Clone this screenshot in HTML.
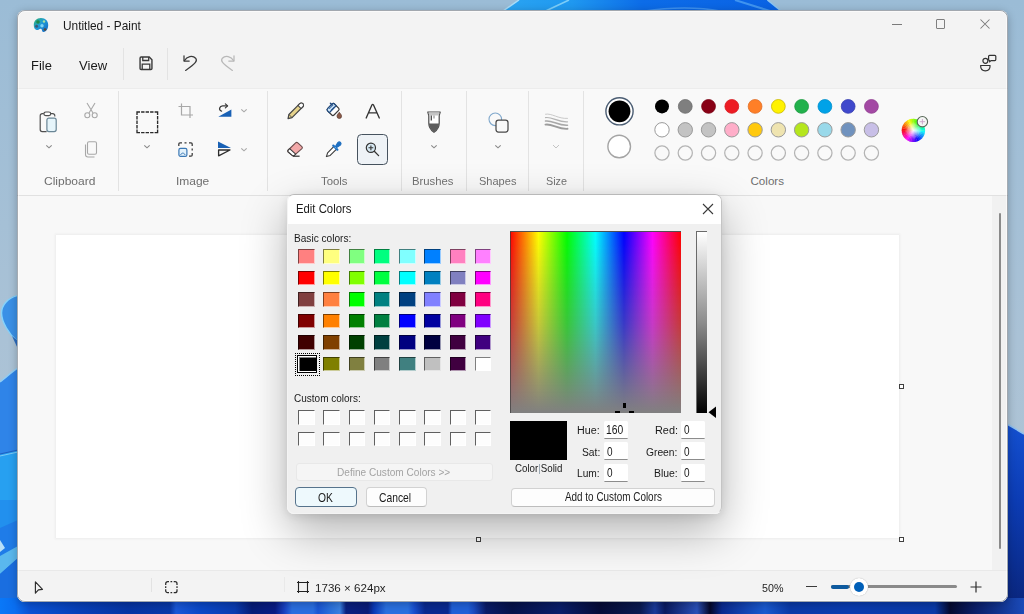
<!DOCTYPE html>
<html><head><meta charset="utf-8">
<style>
*{box-sizing:border-box;margin:0;padding:0}
html,body{width:1024px;height:614px;overflow:hidden}
body{position:relative;font-family:"Liberation Sans",sans-serif;color:#1b1b1b;background:#9fbbd5}
.a{position:absolute}
.t{position:absolute;white-space:nowrap;line-height:1}
svg{position:absolute;overflow:visible}
.sep{position:absolute;width:1px;background:#e3e3e3}
.lbl{position:absolute;white-space:nowrap;line-height:1;font-size:11.5px;color:#6b6b6b}
</style></head><body>
<!-- wallpaper -->
<svg width="1024" height="614" viewBox="0 0 1024 614" style="left:0;top:0">
 <defs>
  <linearGradient id="wg" x1="0" y1="0" x2="0" y2="1">
   <stop offset="0" stop-color="#9bbcd6"/><stop offset="0.55" stop-color="#aac2d6"/><stop offset="1" stop-color="#b2c5d4"/>
  </linearGradient>
  <linearGradient id="bb" x1="0" y1="0" x2="1024" y2="0" gradientUnits="userSpaceOnUse"><stop offset="0.0000" stop-color="#0a78f8"/><stop offset="0.0146" stop-color="#0a6ef0"/><stop offset="0.0293" stop-color="#0a52d4"/><stop offset="0.0781" stop-color="#0840b8"/><stop offset="0.1250" stop-color="#0634a4"/><stop offset="0.1660" stop-color="#0838a8"/><stop offset="0.1719" stop-color="#1a58d8"/><stop offset="0.1953" stop-color="#0a48c8"/><stop offset="0.2295" stop-color="#0a3cb0"/><stop offset="0.2461" stop-color="#061c78"/><stop offset="0.2686" stop-color="#0a1c84"/><stop offset="0.2783" stop-color="#1a44c4"/><stop offset="0.2852" stop-color="#2a6ee0"/><stop offset="0.3057" stop-color="#2a6ee0"/><stop offset="0.3105" stop-color="#1a56d4"/><stop offset="0.3223" stop-color="#2a70dc"/><stop offset="0.3320" stop-color="#3a80e0"/><stop offset="0.3379" stop-color="#0a2080"/><stop offset="0.3594" stop-color="#0a1c78"/><stop offset="0.3652" stop-color="#0a3ab8"/><stop offset="0.3770" stop-color="#2a70e0"/><stop offset="0.3984" stop-color="#2a70e0"/><stop offset="0.4043" stop-color="#1a50d0"/><stop offset="0.4150" stop-color="#0a2a90"/><stop offset="0.4375" stop-color="#0a2a90"/><stop offset="0.4414" stop-color="#2060d8"/><stop offset="0.4570" stop-color="#2060d8"/><stop offset="0.4629" stop-color="#1a4ac0"/><stop offset="0.4746" stop-color="#0a1c68"/><stop offset="0.5000" stop-color="#06124a"/><stop offset="0.5469" stop-color="#0a1e6a"/><stop offset="0.5859" stop-color="#060c38"/><stop offset="0.6250" stop-color="#0a1a50"/><stop offset="0.6396" stop-color="#1a3a9a"/><stop offset="0.6494" stop-color="#0a1a60"/><stop offset="0.6807" stop-color="#2a50b8"/><stop offset="0.6934" stop-color="#05082a"/><stop offset="0.7051" stop-color="#0a2a90"/><stop offset="0.7471" stop-color="#1a5ad0"/><stop offset="0.7715" stop-color="#0a3aa8"/><stop offset="0.8301" stop-color="#0a3cb0"/><stop offset="0.9131" stop-color="#0a3aa8"/><stop offset="0.9277" stop-color="#050a30"/><stop offset="0.9521" stop-color="#0a1e68"/><stop offset="1.0000" stop-color="#1a4ab8"/></linearGradient>
  <linearGradient id="rb" x1="0" y1="0" x2="0" y2="1">
   <stop offset="0" stop-color="#1450d0"/><stop offset="0.4" stop-color="#0c3cb4"/><stop offset="1" stop-color="#0a2478"/>
  </linearGradient>
 </defs>
 <rect width="1024" height="614" fill="url(#wg)"/>
 <defs><linearGradient id="tb" x1="0" y1="0" x2="1" y2="0"><stop offset="0" stop-color="#2aa4f2"/><stop offset="0.25" stop-color="#1f98f0"/><stop offset="0.5" stop-color="#0c6ce8"/><stop offset="1" stop-color="#0a62e4"/></linearGradient></defs>
 <path d="M503 11 L519 0 L767.4 0 L781 11 Z" fill="url(#tb)"/>
 <path d="M503 11 L519 0" stroke="#a8dcf8" stroke-width="1.5"/>
 <path d="M545.6 11 L569 0" stroke="#7ccdf8" stroke-width="1.6"/>
 <path d="M735 0 L770 11" stroke="#3f94f0" stroke-width="2"/>
 <path d="M767.4 0 L781 11" stroke="#8cc4f0" stroke-width="1.5"/>
 <path d="M645 11 C670 7 700 7 720 11" fill="none" stroke="#3c90f0" stroke-width="1.5"/>
 <!-- left strip -->
 <path d="M17 295.6 C8 298 1.5 305 1.5 313 C1.5 322 9 334 17 341 Z" fill="#3a90e6"/>
 <path d="M17 295.6 C8 298 1.5 305 1.5 313 C1.5 322 9 334 17 341" fill="none" stroke="#86d2fa" stroke-width="1.5"/>
 <path d="M12 336 L18 341 L18 349 Z" fill="#2a6cc0"/>
 <path d="M0 382 C6 378 12 371 18 368 L18 614 L0 614 Z" fill="#2f84e8"/>
 <path d="M0 382 C6 378 12 371 18 368" fill="none" stroke="#8fcdf5" stroke-width="1.5"/>
 <path d="M0 454.5 L18 450.6 L18 614 L0 614 Z" fill="#27a0f0"/>
 <path d="M0 454 L18 450" fill="none" stroke="#1f5fc0" stroke-width="1"/>
 <path d="M0 456 L18 452" fill="none" stroke="#7ccaf5" stroke-width="1"/>
 <path d="M0 500 L18 500 L18 614 L0 614 Z" fill="#2290ee"/>
 <path d="M0 528 L18 520 L18 614 L0 614 Z" fill="#1f7ce8"/>
 <path d="M0 556 L18 546 L18 558 L0 574 Z" fill="#5ab8ee"/>
 <path d="M0 540 L5 548 L0 552 Z" fill="#b8e0f8"/>
 <path d="M0 574 L18 558 L18 614 L0 614 Z" fill="#1a6ee0"/>
 <!-- right strip -->
 <path d="M1007 424 L1024 434 L1024 614 L1007 614 Z" fill="url(#rb)"/>
 <path d="M1007 424 L1024 434" stroke="#8fc0f0" stroke-width="1.5"/>
 <!-- bottom strip -->
 <rect x="0" y="598" width="1024" height="16" fill="url(#bb)"/>
</svg>
<!-- window -->
<div class="a" style="left:16.8px;top:10px;width:991.1px;height:591.7px;border-radius:8px;background:#f3f3f3;overflow:hidden;box-shadow:0 2px 8px rgba(0,0,0,0.25)">
 <div class="a" style="left:0;top:78px;width:991.1px;height:108px;background:#f9f9f9;border-top:1px solid #ececec;border-bottom:1px solid #e1e1e1"></div>
 <div class="a" style="left:0;top:186px;width:975.2px;height:374px;background:#f8f8f8"></div>
 <div class="a" style="left:975.2px;top:186px;width:16px;height:374px;background:#f1f1f1"></div>
 <div class="a" style="left:0;top:560px;width:991.1px;height:31.7px;background:#f3f3f3;border-top:1px solid #e9e9e9"></div>
</div>
<div class="a" style="left:16.8px;top:10px;width:991.1px;height:591.7px;border-radius:8px;border:1px solid rgba(50,65,80,0.42)"></div>
<div class="a" style="left:17.8px;top:11px;width:989.1px;height:589.7px;border-radius:7px;border:1px solid rgba(255,255,255,0.55)"></div>
<!-- title bar -->
<svg width="16" height="16" viewBox="0 0 16 16" style="left:32.5px;top:16.5px">
 <defs><linearGradient id="pal" x1="0" y1="0" x2="1" y2="1"><stop offset="0" stop-color="#2fb36a"/><stop offset="0.45" stop-color="#1f9ad8"/><stop offset="1" stop-color="#1565c0"/></linearGradient></defs>
 <path d="M8 1 C12.5 1 15.2 4 15.2 8 C15.2 11.5 13.5 14.8 10.5 15 C8.5 15.1 9.5 12.5 8 11.8 C6.5 11.2 5.5 13.5 3.5 13 C1.5 12.5 0.8 10.2 0.8 8 C0.8 4 3.5 1 8 1 Z" fill="url(#pal)"/>
 <circle cx="5" cy="5" r="1.8" fill="#1e8a4a"/>
 <circle cx="3.6" cy="9.2" r="1.5" fill="#3d5a78"/>
 <circle cx="9" cy="8.8" r="1.7" fill="#7fd4f5"/>
 <circle cx="12" cy="12.5" r="1.3" fill="#5a4a3a"/>
 <circle cx="11" cy="4.5" r="1.2" fill="#a6e0a0"/>
</svg>
<!-- caption buttons -->
<div class="a" style="left:892px;top:24.2px;width:10px;height:1px;background:#7a7a7a"></div>
<div class="a" style="left:936px;top:19.3px;width:9.2px;height:9.4px;border:1px solid #7f7f7f;border-radius:1px"></div>
<svg width="12" height="12" viewBox="0 0 12 12" style="left:979px;top:18px"><path d="M1.5 1.5 L10.5 10.5 M10.5 1.5 L1.5 10.5" stroke="#7a7a7a" stroke-width="1.05"/></svg>
<!-- menu bar -->
<div class="sep" style="left:123px;top:48px;height:32px;background:#e3e3e3"></div>
<svg width="16" height="16" viewBox="0 0 16 16" style="left:137.6px;top:54.6px;transform:scale(1.08);transform-origin:8px 8px">
 <path d="M2.5 3.5 a1 1 0 0 1 1-1 h7.5 l2.5 2.5 v8 a1 1 0 0 1 -1 1 h-9 a1 1 0 0 1 -1-1 z" fill="none" stroke="#3a3a3a" stroke-width="1.3"/>
 <path d="M5 2.5 v3.2 h5.5 v-3.2" fill="none" stroke="#3a3a3a" stroke-width="1.2"/>
 <path d="M4.5 13.5 v-4.5 h7 v4.5" fill="none" stroke="#3a3a3a" stroke-width="1.2"/>
</svg>
<div class="sep" style="left:167px;top:48px;height:32px;background:#e3e3e3"></div>
<svg width="16" height="17" viewBox="0 0 16 17" style="left:182px;top:54px">
 <path d="M2 1.8 V7 H7.2" fill="none" stroke="#3a3a3a" stroke-width="1.25" stroke-linecap="round" stroke-linejoin="round"/>
 <path d="M2.4 6.6 C5 2.5 10.5 1 13.6 4.2 C15.6 6.5 14.5 9.2 3.6 16.4" fill="none" stroke="#3a3a3a" stroke-width="1.25" stroke-linecap="round"/>
</svg>
<svg width="16" height="17" viewBox="0 0 16 17" style="left:220.2px;top:54px">
 <path d="M14 1.8 V7 H8.8" fill="none" stroke="#b8b8b8" stroke-width="1.25" stroke-linecap="round" stroke-linejoin="round"/>
 <path d="M13.6 6.6 C11 2.5 5.5 1 2.4 4.2 C0.4 6.5 1.5 9.2 12.4 16.4" fill="none" stroke="#b8b8b8" stroke-width="1.25" stroke-linecap="round"/>
</svg>
<!-- feedback icon -->
<svg width="18" height="18" viewBox="0 0 18 18" style="left:979px;top:54px">
 <circle cx="6.4" cy="6.8" r="2.5" fill="none" stroke="#333" stroke-width="1.2"/>
 <path d="M1.6 11.5 H11.1 C11.1 15 9 16.8 6.35 16.8 C3.7 16.8 1.6 15 1.6 11.5 Z" fill="none" stroke="#333" stroke-width="1.2" stroke-linejoin="round"/>
 <path d="M10.6 1.3 H15.8 a1 1 0 0 1 1 1 V5.6 a1 1 0 0 1 -1 1 H12 L10.6 7.9 V6.6 a1 1 0 0 1 -1 -1 V2.3 a1 1 0 0 1 1 -1 Z" fill="none" stroke="#333" stroke-width="1.2" stroke-linejoin="round"/>
</svg>
<!-- toolbar separators -->
<div class="sep" style="left:118px;top:91px;height:100px"></div>
<div class="sep" style="left:267px;top:91px;height:100px"></div>
<div class="sep" style="left:401px;top:91px;height:100px"></div>
<div class="sep" style="left:466px;top:91px;height:100px"></div>
<div class="sep" style="left:528px;top:91px;height:100px"></div>
<div class="sep" style="left:583px;top:91px;height:100px"></div>
<!-- labels -->
<!-- clipboard -->
<svg width="20" height="22" viewBox="0 0 20 22" style="left:39px;top:111px">
 <path d="M4.8 2.7 H3.2 a2 2 0 0 0 -2 2 V18.6 a2 2 0 0 0 2 2 H7.6" fill="none" stroke="#505050" stroke-width="1.2"/>
 <path d="M11.7 2.7 H13.8 a2 2 0 0 1 2 2 V5.6" fill="none" stroke="#505050" stroke-width="1.2"/>
 <rect x="4.9" y="1" width="6.8" height="3.6" rx="1.8" fill="#ffffff" stroke="#505050" stroke-width="1.2"/>
 <rect x="7.9" y="7.2" width="9.3" height="13.4" rx="2" fill="#e6f5fb" stroke="#6a8696" stroke-width="1.2"/>
</svg>
<svg width="8" height="5" viewBox="0 0 8 5" style="left:44.5px;top:143.5px"><path d="M1.3 1.3 L4 3.8 L6.7 1.3" fill="none" stroke="#8a8a8a" stroke-width="1.15"/></svg>
<svg width="16" height="17" viewBox="0 0 16 17" style="left:83px;top:102px">
 <path d="M4 1 L10 11 M12 1 L6 11" stroke="#a8a8a8" stroke-width="1.1" fill="none"/>
 <circle cx="4.3" cy="13.3" r="2.5" fill="none" stroke="#a8a8a8" stroke-width="1.1"/>
 <circle cx="11.7" cy="13.3" r="2.5" fill="none" stroke="#a8a8a8" stroke-width="1.1"/>
</svg>
<svg width="14" height="17" viewBox="0 0 14 17" style="left:84px;top:141px">
 <rect x="3.5" y="0.8" width="9" height="12.5" rx="1.5" fill="none" stroke="#a8a8a8" stroke-width="1.1"/>
 <path d="M1.5 3.5 v10 a2.5 2.5 0 0 0 2.5 2.5 h6.5" fill="none" stroke="#a8a8a8" stroke-width="1.1"/>
</svg>
<!-- image -->
<svg width="23" height="23" viewBox="0 0 23 23" style="left:136px;top:111px">
 <path d="M1 4 V1 H21.6 V21.6 H1 V4" fill="none" stroke="#2a2a2a" stroke-width="1.35" stroke-dasharray="6 1.1 3.4 1.1 3.4 1.1 3.4 1.1"/>
</svg>
<svg width="8" height="5" viewBox="0 0 8 5" style="left:143px;top:143.5px"><path d="M1.3 1.3 L4 3.8 L6.7 1.3" fill="none" stroke="#8a8a8a" stroke-width="1.15"/></svg>
<svg width="16" height="16" viewBox="0 0 16 16" style="left:178px;top:102.5px">
 <path d="M3.5 0.5 v11.5 h11.5 M0.5 3.5 h11.5 v11.5" fill="none" stroke="#a8a8a8" stroke-width="1.2"/>
</svg>
<svg width="15" height="15" viewBox="0 0 15 15" style="left:178px;top:141.5px">
 <path d="M0.8 4 v-2 a1.2 1.2 0 0 1 1.2 -1.2 h2 M6.5 0.8 h2 M11 0.8 h2 a1.2 1.2 0 0 1 1.2 1.2 v2 M14.2 6.5 v2 M14.2 11 v2 a1.2 1.2 0 0 1 -1.2 1.2 h-2" fill="none" stroke="#3a3a3a" stroke-width="1.25"/>
 <rect x="0.9" y="6.3" width="8" height="8" rx="1.6" fill="#e2f1fb" stroke="#3a78b5" stroke-width="1.2"/>
 <path d="M2.6 13 C3.5 10.5 6 10.5 7.2 13" fill="none" stroke="#3a78b5" stroke-width="1"/>
</svg>
<svg width="16" height="15" viewBox="0 0 16 15" style="left:216.5px;top:103px">
 <path d="M1.3 13.75 L14.4 6.5 L14.4 13.75 Z" fill="#1961b5"/>
 <path d="M10.2 2.9 H5.6 C2.4 2.9 1.6 6.9 4 7.9 L4.6 8.1" fill="none" stroke="#3a3a3a" stroke-width="1.25" stroke-linecap="round"/>
 <path d="M8.4 0.9 L10.6 2.9 L8.4 4.9" fill="none" stroke="#3a3a3a" stroke-width="1.25" stroke-linecap="round" stroke-linejoin="round"/>
</svg>
<svg width="8" height="5" viewBox="0 0 8 5" style="left:240px;top:108px"><path d="M1.3 1.3 L4 3.8 L6.7 1.3" fill="none" stroke="#a8a8a8" stroke-width="1.15"/></svg>
<svg width="15" height="16" viewBox="0 0 15 16" style="left:216.5px;top:141px">
 <path d="M1 0.5 L14 7 L1 7 Z" fill="#1961b5"/>
 <path d="M1.6 9 L13 9 L1.6 14.8 Z" fill="none" stroke="#2d2d2d" stroke-width="1.3" stroke-linejoin="round"/>
</svg>
<svg width="8" height="5" viewBox="0 0 8 5" style="left:240px;top:146.5px"><path d="M1.3 1.3 L4 3.8 L6.7 1.3" fill="none" stroke="#a8a8a8" stroke-width="1.15"/></svg>
<!-- tools -->
<svg width="17" height="17" viewBox="0 0 17 17" style="left:287px;top:102.8px">
 <path d="M1 15.6 L1.91 11.47 L12.74 0.64 A2.2 2.2 0 0 1 15.86 3.76 L5.03 14.59 Z" fill="#e6d38c" stroke="#454545" stroke-width="1.15" stroke-linejoin="round"/>
 <path d="M12.74 0.64 A2.2 2.2 0 0 1 15.86 3.76 L14.09 5.53 L10.97 2.41 Z" fill="#ffffff" stroke="#454545" stroke-width="1.1" stroke-linejoin="round"/>
 <path d="M1.91 11.47 L5.03 14.59" stroke="#454545" stroke-width="0.9"/>
</svg>
<svg width="17" height="17" viewBox="0 0 17 17" style="left:326px;top:102px">
 <path d="M1.6 6.6 L6.2 2 Q7.3 0.9 8.4 2 L12.6 6.2 Q13.7 7.3 12.6 8.4 L8 13 Q6.9 14.1 5.8 13 L1.6 8.8 Q0.5 7.7 1.6 6.6 Z" fill="#ffffff" stroke="#3a3a3a" stroke-width="1.2"/>
 <path d="M1.6 6.6 L6.2 2 Q7.3 0.9 8.4 2 L10.2 3.8 L3.4 10.6 L1.6 8.8 Q0.5 7.7 1.6 6.6 Z" fill="#cfe6f8" stroke="#1f4a80" stroke-width="1.2"/>
 <path d="M3.2 7 L7.2 3 M4.6 8.4 L8.6 4.4" stroke="#2a5f9e" stroke-width="0.9"/>
 <path d="M4.4 1.2 L6 2.8" stroke="#1f4a80" stroke-width="1.4" stroke-linecap="round"/>
 <path d="M13.3 10.3 C14.8 12 15.6 13.2 15.6 14.2 a2.3 2.3 0 0 1 -4.6 0 C11 13.2 11.8 12 13.3 10.3 Z" fill="#8a5a48" stroke="#5a3a30" stroke-width="0.7"/>
</svg>
<svg width="16" height="16" viewBox="0 0 16 16" style="left:365px;top:102.5px">
 <path d="M1.2 15 L7 1.8 Q7.7 0.9 8.4 1.8 L14.3 15 M3.6 9.8 H11.9" fill="none" stroke="#333333" stroke-width="1.35" stroke-linecap="round" stroke-linejoin="round"/>
</svg>
<svg width="18" height="18" viewBox="0 0 18 18" style="left:286px;top:140px">
 <path d="M9.6 2.9 Q10.7 1.9 11.8 2.9 L15.9 6.6 Q16.9 7.6 15.9 8.6 L8.3 15.3 Q7.25 16.3 6.2 15.3 L2.3 12 Q1.3 11 2.3 10 Z" fill="#f3a9a9" stroke="#6a4a4a" stroke-width="1.1" stroke-linejoin="round"/>
 <path d="M3.65 8.7 L9.66 14.1 L8.3 15.3 Q7.25 16.3 6.2 15.3 L2.3 12 Q1.3 11 2.3 10 Z" fill="#ffffff" stroke="#3d3d3d" stroke-width="1.1" stroke-linejoin="round"/>
 <path d="M7.2 16.2 H13.6" stroke="#2d2d2d" stroke-width="1.2"/>
</svg>
<svg width="17" height="17" viewBox="0 0 17 17" style="left:325px;top:140px">
 <path d="M9.2 6.2 L2.6 12.8 L1.4 16.6 L5.2 15.4 L11.8 8.8" fill="#ffffff" stroke="#3a3a3a" stroke-width="1.1" stroke-linejoin="round"/>
 <path d="M8.3 5.6 L12.4 9.7" stroke="#1f6fc0" stroke-width="2.2" stroke-linecap="round"/>
 <path d="M9.2 4.8 a1 1 0 0 1 0 0" stroke="#6ab8f0" stroke-width="0.8"/>
 <path d="M10.6 6.4 L12.9 2.6 Q14.2 1.4 15.5 2.5 Q16.6 3.8 15.4 5.1 L11.6 7.4 Z" fill="#1f6fc0" stroke="#1f6fc0" stroke-width="1.2" stroke-linejoin="round"/>
 <path d="M9.6 6.8 L11.2 8.4" stroke="#7cc4f4" stroke-width="0.9"/>
</svg>
<div class="a" style="left:357px;top:134px;width:31px;height:31px;border:1.5px solid #46525e;border-radius:4.5px;background:#eef2f6"></div>
<svg width="15" height="15" viewBox="0 0 15 15" style="left:365px;top:141.5px">
 <circle cx="5.9" cy="5.8" r="4.6" fill="#d6e8f3" stroke="#333" stroke-width="1.2"/>
 <path d="M5.9 3.4 V8.2 M3.5 5.8 H8.3" stroke="#333" stroke-width="1.1"/>
 <path d="M9.3 9.2 L13.6 13.6" stroke="#333" stroke-width="1.3" stroke-linecap="round"/>
</svg>
<!-- brushes -->
<svg width="14" height="22" viewBox="0 0 14 22" style="left:427px;top:111px">
 <path d="M0.8 1 L13.2 1 L12.2 4.6 L12.2 12 C12.2 16 9.5 19.6 7 21.3 C4.5 19.6 1.8 16 1.8 12 L1.8 4.6 Z" fill="#ffffff" stroke="#4a4a4a" stroke-width="1.2" stroke-linejoin="round"/>
 <path d="M1.4 1.6 L12.6 1.6 L11.8 4.4 L2.2 4.4 Z" fill="#c4c4c4"/>
 <path d="M1.8 12.6 L12.2 12.6 C12 16 9.5 19.4 7 21 C4.5 19.4 2 16 1.8 12.6 Z" fill="#5e5e5e"/>
 <path d="M4.3 4.6 V9.6" stroke="#4a4a4a" stroke-width="1.3"/>
 <path d="M7 4.6 V7.4" stroke="#9a9a9a" stroke-width="1.3"/>
</svg>
<svg width="8" height="5" viewBox="0 0 8 5" style="left:430px;top:143.5px"><path d="M1.3 1.3 L4 3.8 L6.7 1.3" fill="none" stroke="#8a8a8a" stroke-width="1.15"/></svg>
<!-- shapes -->
<svg width="22" height="22" viewBox="0 0 22 22" style="left:487.5px;top:111.5px">
 <circle cx="7.3" cy="7.3" r="6.3" fill="none" stroke="#80a8cc" stroke-width="1.1"/>
 <rect x="8" y="8" width="12" height="12" rx="2.5" fill="#f9f9f9" stroke="#4a4a4a" stroke-width="1.25"/>
</svg>
<svg width="8" height="5" viewBox="0 0 8 5" style="left:494px;top:143.5px"><path d="M1.3 1.3 L4 3.8 L6.7 1.3" fill="none" stroke="#8a8a8a" stroke-width="1.15"/></svg>
<!-- size -->
<svg width="23" height="18" viewBox="0 0 23 18" style="left:545px;top:113px">
 <path d="M0.5 1.2 C7 0.0 13 6.0 22.5 5.4" fill="none" stroke="#c4c4c4" stroke-width="0.9" stroke-linecap="round"/>
 <path d="M0.5 4.6 C7 3.3999999999999995 13 9.399999999999999 22.5 8.8" fill="none" stroke="#b4b4b4" stroke-width="1.2" stroke-linecap="round"/>
 <path d="M0.5 8.0 C7 6.8 13 12.8 22.5 12.2" fill="none" stroke="#a8a8a8" stroke-width="1.5" stroke-linecap="round"/>
 <path d="M0.5 11.6 C7 10.4 13 16.4 22.5 15.8" fill="none" stroke="#9c9c9c" stroke-width="1.9" stroke-linecap="round"/>
</svg>
<svg width="8" height="5" viewBox="0 0 8 5" style="left:552px;top:143.5px"><path d="M1 1 L4 4 L7 1" fill="none" stroke="#c4c4c4" stroke-width="1"/></svg>
<!-- colors -->
<svg width="1024" height="200" viewBox="0 0 1024 200" style="left:0;top:0">
<circle cx="619.5" cy="111.3" r="13.6" fill="#ffffff" stroke="#4b5d73" stroke-width="1.4"/>
<circle cx="619.5" cy="111.3" r="10.9" fill="#000000"/>
<circle cx="619.2" cy="146.5" r="11.3" fill="#ffffff" stroke="#a4a4a4" stroke-width="1.4"/>
<circle cx="662.00" cy="106.4" r="7.0" fill="#000000"/>
<circle cx="662.00" cy="129.8" r="7.2" fill="#ffffff" stroke="#9a9a9a" stroke-width="1"/>
<circle cx="662.00" cy="153" r="7.1" fill="none" stroke="#b4b4b4" stroke-width="1.25"/>
<circle cx="685.27" cy="106.4" r="6.9" fill="#7f7f7f" stroke="#6f6f6f" stroke-width="0.8"/>
<circle cx="685.27" cy="129.8" r="7.2" fill="#c3c3c3" stroke="#9a9a9a" stroke-width="1"/>
<circle cx="685.27" cy="153" r="7.1" fill="none" stroke="#b4b4b4" stroke-width="1.25"/>
<circle cx="708.54" cy="106.4" r="6.9" fill="#880015" stroke="#7a0012" stroke-width="0.8"/>
<circle cx="708.54" cy="129.8" r="7.2" fill="#c3c3c3" stroke="#9a9a9a" stroke-width="1"/>
<circle cx="708.54" cy="153" r="7.1" fill="none" stroke="#b4b4b4" stroke-width="1.25"/>
<circle cx="731.81" cy="106.4" r="6.9" fill="#ed1c24" stroke="#d51a21" stroke-width="0.8"/>
<circle cx="731.81" cy="129.8" r="7.2" fill="#ffaec9" stroke="#9a9a9a" stroke-width="1"/>
<circle cx="731.81" cy="153" r="7.1" fill="none" stroke="#b4b4b4" stroke-width="1.25"/>
<circle cx="755.08" cy="106.4" r="6.9" fill="#ff7f27" stroke="#e0702a" stroke-width="0.8"/>
<circle cx="755.08" cy="129.8" r="7.2" fill="#ffc90e" stroke="#9a9a9a" stroke-width="1"/>
<circle cx="755.08" cy="153" r="7.1" fill="none" stroke="#b4b4b4" stroke-width="1.25"/>
<circle cx="778.35" cy="106.4" r="6.9" fill="#fff200" stroke="#c8b800" stroke-width="0.8"/>
<circle cx="778.35" cy="129.8" r="7.2" fill="#efe4b0" stroke="#9a9a9a" stroke-width="1"/>
<circle cx="778.35" cy="153" r="7.1" fill="none" stroke="#b4b4b4" stroke-width="1.25"/>
<circle cx="801.62" cy="106.4" r="6.9" fill="#22b14c" stroke="#1c9a40" stroke-width="0.8"/>
<circle cx="801.62" cy="129.8" r="7.2" fill="#b5e61d" stroke="#9a9a9a" stroke-width="1"/>
<circle cx="801.62" cy="153" r="7.1" fill="none" stroke="#b4b4b4" stroke-width="1.25"/>
<circle cx="824.89" cy="106.4" r="6.9" fill="#00a2e8" stroke="#008fcc" stroke-width="0.8"/>
<circle cx="824.89" cy="129.8" r="7.2" fill="#99d9ea" stroke="#9a9a9a" stroke-width="1"/>
<circle cx="824.89" cy="153" r="7.1" fill="none" stroke="#b4b4b4" stroke-width="1.25"/>
<circle cx="848.16" cy="106.4" r="6.9" fill="#3f48cc" stroke="#3840b0" stroke-width="0.8"/>
<circle cx="848.16" cy="129.8" r="7.2" fill="#7092be" stroke="#9a9a9a" stroke-width="1"/>
<circle cx="848.16" cy="153" r="7.1" fill="none" stroke="#b4b4b4" stroke-width="1.25"/>
<circle cx="871.43" cy="106.4" r="6.9" fill="#a349a4" stroke="#903f90" stroke-width="0.8"/>
<circle cx="871.43" cy="129.8" r="7.2" fill="#c8bfe7" stroke="#9a9a9a" stroke-width="1"/>
<circle cx="871.43" cy="153" r="7.1" fill="none" stroke="#b4b4b4" stroke-width="1.25"/>
<defs>
<radialGradient id="wcen" cx="0.5" cy="0.5" r="0.5"><stop offset="0" stop-color="#ffffff" stop-opacity="0.95"/><stop offset="0.75" stop-color="#ffffff" stop-opacity="0"/></radialGradient>
</defs>
<path d="M913.4 130.4 L925.10 130.40 A11.7 11.7 0 0 1 924.84 132.83 Z" fill="hsl(180,95%,52%)"/>
<path d="M913.4 130.4 L924.92 132.43 A11.7 11.7 0 0 1 924.25 134.78 Z" fill="hsl(190,95%,52%)"/>
<path d="M913.4 130.4 L924.39 134.40 A11.7 11.7 0 0 1 923.32 136.60 Z" fill="hsl(200,95%,52%)"/>
<path d="M913.4 130.4 L923.53 136.25 A11.7 11.7 0 0 1 922.09 138.23 Z" fill="hsl(210,95%,52%)"/>
<path d="M913.4 130.4 L922.36 137.92 A11.7 11.7 0 0 1 920.60 139.62 Z" fill="hsl(220,95%,52%)"/>
<path d="M913.4 130.4 L920.92 139.36 A11.7 11.7 0 0 1 918.89 140.73 Z" fill="hsl(230,95%,52%)"/>
<path d="M913.4 130.4 L919.25 140.53 A11.7 11.7 0 0 1 917.02 141.53 Z" fill="hsl(240,95%,52%)"/>
<path d="M913.4 130.4 L917.40 141.39 A11.7 11.7 0 0 1 915.03 141.99 Z" fill="hsl(250,95%,52%)"/>
<path d="M913.4 130.4 L915.43 141.92 A11.7 11.7 0 0 1 912.99 142.09 Z" fill="hsl(260,95%,52%)"/>
<path d="M913.4 130.4 L913.40 142.10 A11.7 11.7 0 0 1 910.97 141.84 Z" fill="hsl(270,95%,52%)"/>
<path d="M913.4 130.4 L911.37 141.92 A11.7 11.7 0 0 1 909.02 141.25 Z" fill="hsl(280,95%,52%)"/>
<path d="M913.4 130.4 L909.40 141.39 A11.7 11.7 0 0 1 907.20 140.32 Z" fill="hsl(290,95%,52%)"/>
<path d="M913.4 130.4 L907.55 140.53 A11.7 11.7 0 0 1 905.57 139.09 Z" fill="hsl(300,95%,52%)"/>
<path d="M913.4 130.4 L905.88 139.36 A11.7 11.7 0 0 1 904.18 137.60 Z" fill="hsl(310,95%,52%)"/>
<path d="M913.4 130.4 L904.44 137.92 A11.7 11.7 0 0 1 903.07 135.89 Z" fill="hsl(320,95%,52%)"/>
<path d="M913.4 130.4 L903.27 136.25 A11.7 11.7 0 0 1 902.27 134.02 Z" fill="hsl(330,95%,52%)"/>
<path d="M913.4 130.4 L902.41 134.40 A11.7 11.7 0 0 1 901.81 132.03 Z" fill="hsl(340,95%,52%)"/>
<path d="M913.4 130.4 L901.88 132.43 A11.7 11.7 0 0 1 901.71 129.99 Z" fill="hsl(350,95%,52%)"/>
<path d="M913.4 130.4 L901.70 130.40 A11.7 11.7 0 0 1 901.96 127.97 Z" fill="hsl(0,95%,52%)"/>
<path d="M913.4 130.4 L901.88 128.37 A11.7 11.7 0 0 1 902.55 126.02 Z" fill="hsl(10,95%,52%)"/>
<path d="M913.4 130.4 L902.41 126.40 A11.7 11.7 0 0 1 903.48 124.20 Z" fill="hsl(20,95%,52%)"/>
<path d="M913.4 130.4 L903.27 124.55 A11.7 11.7 0 0 1 904.71 122.57 Z" fill="hsl(30,95%,52%)"/>
<path d="M913.4 130.4 L904.44 122.88 A11.7 11.7 0 0 1 906.20 121.18 Z" fill="hsl(40,95%,52%)"/>
<path d="M913.4 130.4 L905.88 121.44 A11.7 11.7 0 0 1 907.91 120.07 Z" fill="hsl(50,95%,52%)"/>
<path d="M913.4 130.4 L907.55 120.27 A11.7 11.7 0 0 1 909.78 119.27 Z" fill="hsl(60,95%,52%)"/>
<path d="M913.4 130.4 L909.40 119.41 A11.7 11.7 0 0 1 911.77 118.81 Z" fill="hsl(70,95%,52%)"/>
<path d="M913.4 130.4 L911.37 118.88 A11.7 11.7 0 0 1 913.81 118.71 Z" fill="hsl(80,95%,52%)"/>
<path d="M913.4 130.4 L913.40 118.70 A11.7 11.7 0 0 1 915.83 118.96 Z" fill="hsl(90,95%,52%)"/>
<path d="M913.4 130.4 L915.43 118.88 A11.7 11.7 0 0 1 917.78 119.55 Z" fill="hsl(100,95%,52%)"/>
<path d="M913.4 130.4 L917.40 119.41 A11.7 11.7 0 0 1 919.60 120.48 Z" fill="hsl(110,95%,52%)"/>
<path d="M913.4 130.4 L919.25 120.27 A11.7 11.7 0 0 1 921.23 121.71 Z" fill="hsl(120,95%,52%)"/>
<path d="M913.4 130.4 L920.92 121.44 A11.7 11.7 0 0 1 922.62 123.20 Z" fill="hsl(130,95%,52%)"/>
<path d="M913.4 130.4 L922.36 122.88 A11.7 11.7 0 0 1 923.73 124.91 Z" fill="hsl(140,95%,52%)"/>
<path d="M913.4 130.4 L923.53 124.55 A11.7 11.7 0 0 1 924.53 126.78 Z" fill="hsl(150,95%,52%)"/>
<path d="M913.4 130.4 L924.39 126.40 A11.7 11.7 0 0 1 924.99 128.77 Z" fill="hsl(160,95%,52%)"/>
<path d="M913.4 130.4 L924.92 128.37 A11.7 11.7 0 0 1 925.09 130.81 Z" fill="hsl(170,95%,52%)"/>
<circle cx="913.4" cy="130.4" r="11.7" fill="url(#wcen)"/>
<circle cx="922.4" cy="121.7" r="5.2" fill="#f4f6f4" stroke="#586858" stroke-width="1.1"/>
<path d="M922.4 119 V124.4 M919.7 121.7 H925.1" stroke="#c9a3c9" stroke-width="0.9"/>
</svg>
<!-- canvas -->
<div class="a" style="left:55px;top:234px;width:845px;height:305px;background:#ececec;filter:blur(1px)"></div>
<div class="a" style="left:56px;top:235px;width:843px;height:303px;background:#ffffff"></div>
<div class="a" style="left:899px;top:384px;width:5px;height:5px;border:1px solid #404040;background:#fff"></div>
<div class="a" style="left:475.5px;top:537px;width:5px;height:5px;border:1px solid #404040;background:#fff"></div>
<div class="a" style="left:899px;top:537px;width:5px;height:5px;border:1px solid #404040;background:#fff"></div>
<div class="a" style="left:999px;top:212.5px;width:2px;height:336px;border-radius:1px;background:#8a8a8a"></div>
<svg width="10" height="13" viewBox="0 0 10 13" style="left:34px;top:580.5px"><path d="M1.4 0.9 L8.5 8.4 L4.4 8.9 L1.4 12.2 Z" fill="none" stroke="#2d2d2d" stroke-width="1.15" stroke-linejoin="round"/></svg>
<div class="sep" style="left:150.5px;top:578px;height:14px;background:#e2e2e2"></div>
<svg width="13" height="13" viewBox="0 0 13 13" style="left:164.6px;top:580.6px"><path d="M0.7 4 V2.7 a2 2 0 0 1 2 -2 H4 M8.7 0.7 H10 a2 2 0 0 1 2 2 V4 M12 8.3 V9.7 a2 2 0 0 1 -2 2 H8.7 M4 11.7 H2.7 a2 2 0 0 1 -2 -2 V8.3 M5.5 0.7 H7.2 M12 5.3 V7 M5.5 11.7 H7.2 M0.7 5.3 V7" fill="none" stroke="#2a2a2a" stroke-width="1.25"/></svg>
<div class="sep" style="left:283.5px;top:577px;height:15px;background:#e9e9e9"></div>
<svg width="14" height="14" viewBox="0 0 14 14" style="left:296px;top:580px"><path d="M2.5 1 V13 M11.5 1 V13 M1 2.5 H13 M1 11.5 H13" fill="none" stroke="#222" stroke-width="1.1"/></svg>
<div class="a" style="left:805.5px;top:586px;width:11px;height:1.2px;background:#3a3a3a"></div>
<div class="a" style="left:831px;top:584.8px;width:126px;height:3.6px;border-radius:2px;background:#8a8a8a"></div>
<div class="a" style="left:831px;top:584.9px;width:18px;height:3.8px;border-radius:2px;background:#0e5a9e"></div>
<div class="a" style="left:849.8px;top:577.5px;width:18px;height:18px;border-radius:50%;background:#fff;box-shadow:0 0 1px rgba(0,0,0,0.35)"></div>
<div class="a" style="left:853.8px;top:581.5px;width:10px;height:10px;border-radius:50%;background:#005fb8"></div>
<svg width="12" height="12" viewBox="0 0 12 12" style="left:970.3px;top:581px"><path d="M6 0.5 V11.5 M0.5 6 H11.5" stroke="#2d2d2d" stroke-width="1.2"/></svg>
<!-- dialog -->
<div class="a" style="left:287.3px;top:194.3px;width:435px;height:319.5px;border-radius:7px;box-shadow:0 18px 46px rgba(0,0,0,0.30),0 2px 10px rgba(0,0,0,0.10)"></div>
<div class="a" style="left:287.3px;top:194.3px;width:435px;height:319.5px;border-radius:7px;background:#f0f0f0;border:1px solid #f4f4f4;border-top-color:#b9b9b9;border-right-color:#c4c4c4;overflow:hidden"><div class="a" style="left:0;top:0;width:433px;height:28.5px;background:#ffffff"></div></div>
<svg width="12" height="12" viewBox="0 0 12 12" style="left:701.7px;top:202.7px"><path d="M1 1 L11 11 M11 1 L1 11" stroke="#3a3a3a" stroke-width="1.1"/></svg>
<div class="a" style="left:298.10px;top:249.40px;width:16.5px;height:14.6px;background:#FF8080;border-top:1.4px solid rgba(0,0,0,0.5);border-left:1.4px solid rgba(0,0,0,0.5);border-right:1px solid rgba(255,255,255,0.6);border-bottom:1px solid rgba(255,255,255,0.6)"></div>
<div class="a" style="left:323.35px;top:249.40px;width:16.5px;height:14.6px;background:#FFFF80;border-top:1.4px solid rgba(0,0,0,0.5);border-left:1.4px solid rgba(0,0,0,0.5);border-right:1px solid rgba(255,255,255,0.6);border-bottom:1px solid rgba(255,255,255,0.6)"></div>
<div class="a" style="left:348.60px;top:249.40px;width:16.5px;height:14.6px;background:#80FF80;border-top:1.4px solid rgba(0,0,0,0.5);border-left:1.4px solid rgba(0,0,0,0.5);border-right:1px solid rgba(255,255,255,0.6);border-bottom:1px solid rgba(255,255,255,0.6)"></div>
<div class="a" style="left:373.85px;top:249.40px;width:16.5px;height:14.6px;background:#00FF80;border-top:1.4px solid rgba(0,0,0,0.5);border-left:1.4px solid rgba(0,0,0,0.5);border-right:1px solid rgba(255,255,255,0.6);border-bottom:1px solid rgba(255,255,255,0.6)"></div>
<div class="a" style="left:399.10px;top:249.40px;width:16.5px;height:14.6px;background:#80FFFF;border-top:1.4px solid rgba(0,0,0,0.5);border-left:1.4px solid rgba(0,0,0,0.5);border-right:1px solid rgba(255,255,255,0.6);border-bottom:1px solid rgba(255,255,255,0.6)"></div>
<div class="a" style="left:424.35px;top:249.40px;width:16.5px;height:14.6px;background:#0080FF;border-top:1.4px solid rgba(0,0,0,0.5);border-left:1.4px solid rgba(0,0,0,0.5);border-right:1px solid rgba(255,255,255,0.6);border-bottom:1px solid rgba(255,255,255,0.6)"></div>
<div class="a" style="left:449.60px;top:249.40px;width:16.5px;height:14.6px;background:#FF80C0;border-top:1.4px solid rgba(0,0,0,0.5);border-left:1.4px solid rgba(0,0,0,0.5);border-right:1px solid rgba(255,255,255,0.6);border-bottom:1px solid rgba(255,255,255,0.6)"></div>
<div class="a" style="left:474.85px;top:249.40px;width:16.5px;height:14.6px;background:#FF80FF;border-top:1.4px solid rgba(0,0,0,0.5);border-left:1.4px solid rgba(0,0,0,0.5);border-right:1px solid rgba(255,255,255,0.6);border-bottom:1px solid rgba(255,255,255,0.6)"></div>
<div class="a" style="left:298.10px;top:270.90px;width:16.5px;height:14.6px;background:#FF0000;border-top:1.4px solid rgba(0,0,0,0.5);border-left:1.4px solid rgba(0,0,0,0.5);border-right:1px solid rgba(255,255,255,0.6);border-bottom:1px solid rgba(255,255,255,0.6)"></div>
<div class="a" style="left:323.35px;top:270.90px;width:16.5px;height:14.6px;background:#FFFF00;border-top:1.4px solid rgba(0,0,0,0.5);border-left:1.4px solid rgba(0,0,0,0.5);border-right:1px solid rgba(255,255,255,0.6);border-bottom:1px solid rgba(255,255,255,0.6)"></div>
<div class="a" style="left:348.60px;top:270.90px;width:16.5px;height:14.6px;background:#80FF00;border-top:1.4px solid rgba(0,0,0,0.5);border-left:1.4px solid rgba(0,0,0,0.5);border-right:1px solid rgba(255,255,255,0.6);border-bottom:1px solid rgba(255,255,255,0.6)"></div>
<div class="a" style="left:373.85px;top:270.90px;width:16.5px;height:14.6px;background:#00FF40;border-top:1.4px solid rgba(0,0,0,0.5);border-left:1.4px solid rgba(0,0,0,0.5);border-right:1px solid rgba(255,255,255,0.6);border-bottom:1px solid rgba(255,255,255,0.6)"></div>
<div class="a" style="left:399.10px;top:270.90px;width:16.5px;height:14.6px;background:#00FFFF;border-top:1.4px solid rgba(0,0,0,0.5);border-left:1.4px solid rgba(0,0,0,0.5);border-right:1px solid rgba(255,255,255,0.6);border-bottom:1px solid rgba(255,255,255,0.6)"></div>
<div class="a" style="left:424.35px;top:270.90px;width:16.5px;height:14.6px;background:#0080C0;border-top:1.4px solid rgba(0,0,0,0.5);border-left:1.4px solid rgba(0,0,0,0.5);border-right:1px solid rgba(255,255,255,0.6);border-bottom:1px solid rgba(255,255,255,0.6)"></div>
<div class="a" style="left:449.60px;top:270.90px;width:16.5px;height:14.6px;background:#8080C0;border-top:1.4px solid rgba(0,0,0,0.5);border-left:1.4px solid rgba(0,0,0,0.5);border-right:1px solid rgba(255,255,255,0.6);border-bottom:1px solid rgba(255,255,255,0.6)"></div>
<div class="a" style="left:474.85px;top:270.90px;width:16.5px;height:14.6px;background:#FF00FF;border-top:1.4px solid rgba(0,0,0,0.5);border-left:1.4px solid rgba(0,0,0,0.5);border-right:1px solid rgba(255,255,255,0.6);border-bottom:1px solid rgba(255,255,255,0.6)"></div>
<div class="a" style="left:298.10px;top:292.40px;width:16.5px;height:14.6px;background:#804040;border-top:1.4px solid rgba(0,0,0,0.5);border-left:1.4px solid rgba(0,0,0,0.5);border-right:1px solid rgba(255,255,255,0.6);border-bottom:1px solid rgba(255,255,255,0.6)"></div>
<div class="a" style="left:323.35px;top:292.40px;width:16.5px;height:14.6px;background:#FF8040;border-top:1.4px solid rgba(0,0,0,0.5);border-left:1.4px solid rgba(0,0,0,0.5);border-right:1px solid rgba(255,255,255,0.6);border-bottom:1px solid rgba(255,255,255,0.6)"></div>
<div class="a" style="left:348.60px;top:292.40px;width:16.5px;height:14.6px;background:#00FF00;border-top:1.4px solid rgba(0,0,0,0.5);border-left:1.4px solid rgba(0,0,0,0.5);border-right:1px solid rgba(255,255,255,0.6);border-bottom:1px solid rgba(255,255,255,0.6)"></div>
<div class="a" style="left:373.85px;top:292.40px;width:16.5px;height:14.6px;background:#008080;border-top:1.4px solid rgba(0,0,0,0.5);border-left:1.4px solid rgba(0,0,0,0.5);border-right:1px solid rgba(255,255,255,0.6);border-bottom:1px solid rgba(255,255,255,0.6)"></div>
<div class="a" style="left:399.10px;top:292.40px;width:16.5px;height:14.6px;background:#004080;border-top:1.4px solid rgba(0,0,0,0.5);border-left:1.4px solid rgba(0,0,0,0.5);border-right:1px solid rgba(255,255,255,0.6);border-bottom:1px solid rgba(255,255,255,0.6)"></div>
<div class="a" style="left:424.35px;top:292.40px;width:16.5px;height:14.6px;background:#8080FF;border-top:1.4px solid rgba(0,0,0,0.5);border-left:1.4px solid rgba(0,0,0,0.5);border-right:1px solid rgba(255,255,255,0.6);border-bottom:1px solid rgba(255,255,255,0.6)"></div>
<div class="a" style="left:449.60px;top:292.40px;width:16.5px;height:14.6px;background:#800040;border-top:1.4px solid rgba(0,0,0,0.5);border-left:1.4px solid rgba(0,0,0,0.5);border-right:1px solid rgba(255,255,255,0.6);border-bottom:1px solid rgba(255,255,255,0.6)"></div>
<div class="a" style="left:474.85px;top:292.40px;width:16.5px;height:14.6px;background:#FF0080;border-top:1.4px solid rgba(0,0,0,0.5);border-left:1.4px solid rgba(0,0,0,0.5);border-right:1px solid rgba(255,255,255,0.6);border-bottom:1px solid rgba(255,255,255,0.6)"></div>
<div class="a" style="left:298.10px;top:313.90px;width:16.5px;height:14.6px;background:#800000;border-top:1.4px solid rgba(0,0,0,0.5);border-left:1.4px solid rgba(0,0,0,0.5);border-right:1px solid rgba(255,255,255,0.6);border-bottom:1px solid rgba(255,255,255,0.6)"></div>
<div class="a" style="left:323.35px;top:313.90px;width:16.5px;height:14.6px;background:#FF8000;border-top:1.4px solid rgba(0,0,0,0.5);border-left:1.4px solid rgba(0,0,0,0.5);border-right:1px solid rgba(255,255,255,0.6);border-bottom:1px solid rgba(255,255,255,0.6)"></div>
<div class="a" style="left:348.60px;top:313.90px;width:16.5px;height:14.6px;background:#008000;border-top:1.4px solid rgba(0,0,0,0.5);border-left:1.4px solid rgba(0,0,0,0.5);border-right:1px solid rgba(255,255,255,0.6);border-bottom:1px solid rgba(255,255,255,0.6)"></div>
<div class="a" style="left:373.85px;top:313.90px;width:16.5px;height:14.6px;background:#008040;border-top:1.4px solid rgba(0,0,0,0.5);border-left:1.4px solid rgba(0,0,0,0.5);border-right:1px solid rgba(255,255,255,0.6);border-bottom:1px solid rgba(255,255,255,0.6)"></div>
<div class="a" style="left:399.10px;top:313.90px;width:16.5px;height:14.6px;background:#0000FF;border-top:1.4px solid rgba(0,0,0,0.5);border-left:1.4px solid rgba(0,0,0,0.5);border-right:1px solid rgba(255,255,255,0.6);border-bottom:1px solid rgba(255,255,255,0.6)"></div>
<div class="a" style="left:424.35px;top:313.90px;width:16.5px;height:14.6px;background:#0000A0;border-top:1.4px solid rgba(0,0,0,0.5);border-left:1.4px solid rgba(0,0,0,0.5);border-right:1px solid rgba(255,255,255,0.6);border-bottom:1px solid rgba(255,255,255,0.6)"></div>
<div class="a" style="left:449.60px;top:313.90px;width:16.5px;height:14.6px;background:#800080;border-top:1.4px solid rgba(0,0,0,0.5);border-left:1.4px solid rgba(0,0,0,0.5);border-right:1px solid rgba(255,255,255,0.6);border-bottom:1px solid rgba(255,255,255,0.6)"></div>
<div class="a" style="left:474.85px;top:313.90px;width:16.5px;height:14.6px;background:#8000FF;border-top:1.4px solid rgba(0,0,0,0.5);border-left:1.4px solid rgba(0,0,0,0.5);border-right:1px solid rgba(255,255,255,0.6);border-bottom:1px solid rgba(255,255,255,0.6)"></div>
<div class="a" style="left:298.10px;top:335.40px;width:16.5px;height:14.6px;background:#400000;border-top:1.4px solid rgba(0,0,0,0.5);border-left:1.4px solid rgba(0,0,0,0.5);border-right:1px solid rgba(255,255,255,0.6);border-bottom:1px solid rgba(255,255,255,0.6)"></div>
<div class="a" style="left:323.35px;top:335.40px;width:16.5px;height:14.6px;background:#804000;border-top:1.4px solid rgba(0,0,0,0.5);border-left:1.4px solid rgba(0,0,0,0.5);border-right:1px solid rgba(255,255,255,0.6);border-bottom:1px solid rgba(255,255,255,0.6)"></div>
<div class="a" style="left:348.60px;top:335.40px;width:16.5px;height:14.6px;background:#004000;border-top:1.4px solid rgba(0,0,0,0.5);border-left:1.4px solid rgba(0,0,0,0.5);border-right:1px solid rgba(255,255,255,0.6);border-bottom:1px solid rgba(255,255,255,0.6)"></div>
<div class="a" style="left:373.85px;top:335.40px;width:16.5px;height:14.6px;background:#004040;border-top:1.4px solid rgba(0,0,0,0.5);border-left:1.4px solid rgba(0,0,0,0.5);border-right:1px solid rgba(255,255,255,0.6);border-bottom:1px solid rgba(255,255,255,0.6)"></div>
<div class="a" style="left:399.10px;top:335.40px;width:16.5px;height:14.6px;background:#000080;border-top:1.4px solid rgba(0,0,0,0.5);border-left:1.4px solid rgba(0,0,0,0.5);border-right:1px solid rgba(255,255,255,0.6);border-bottom:1px solid rgba(255,255,255,0.6)"></div>
<div class="a" style="left:424.35px;top:335.40px;width:16.5px;height:14.6px;background:#000040;border-top:1.4px solid rgba(0,0,0,0.5);border-left:1.4px solid rgba(0,0,0,0.5);border-right:1px solid rgba(255,255,255,0.6);border-bottom:1px solid rgba(255,255,255,0.6)"></div>
<div class="a" style="left:449.60px;top:335.40px;width:16.5px;height:14.6px;background:#400040;border-top:1.4px solid rgba(0,0,0,0.5);border-left:1.4px solid rgba(0,0,0,0.5);border-right:1px solid rgba(255,255,255,0.6);border-bottom:1px solid rgba(255,255,255,0.6)"></div>
<div class="a" style="left:474.85px;top:335.40px;width:16.5px;height:14.6px;background:#400080;border-top:1.4px solid rgba(0,0,0,0.5);border-left:1.4px solid rgba(0,0,0,0.5);border-right:1px solid rgba(255,255,255,0.6);border-bottom:1px solid rgba(255,255,255,0.6)"></div>
<div class="a" style="left:295.2px;top:353px;width:24.4px;height:22.5px;border:1px dotted #000"></div>
<div class="a" style="left:296.8px;top:354.9px;width:20.6px;height:18px;border:1.4px solid #000;background:#fff"></div>
<div class="a" style="left:298.6px;top:356.6px;width:17px;height:14.6px;border-top:1px solid #808080;border-left:1px solid #808080;background:#000"></div>
<div class="a" style="left:323.35px;top:356.90px;width:16.5px;height:14.6px;background:#808000;border-top:1.4px solid rgba(0,0,0,0.5);border-left:1.4px solid rgba(0,0,0,0.5);border-right:1px solid rgba(255,255,255,0.6);border-bottom:1px solid rgba(255,255,255,0.6)"></div>
<div class="a" style="left:348.60px;top:356.90px;width:16.5px;height:14.6px;background:#808040;border-top:1.4px solid rgba(0,0,0,0.5);border-left:1.4px solid rgba(0,0,0,0.5);border-right:1px solid rgba(255,255,255,0.6);border-bottom:1px solid rgba(255,255,255,0.6)"></div>
<div class="a" style="left:373.85px;top:356.90px;width:16.5px;height:14.6px;background:#808080;border-top:1.4px solid rgba(0,0,0,0.5);border-left:1.4px solid rgba(0,0,0,0.5);border-right:1px solid rgba(255,255,255,0.6);border-bottom:1px solid rgba(255,255,255,0.6)"></div>
<div class="a" style="left:399.10px;top:356.90px;width:16.5px;height:14.6px;background:#408080;border-top:1.4px solid rgba(0,0,0,0.5);border-left:1.4px solid rgba(0,0,0,0.5);border-right:1px solid rgba(255,255,255,0.6);border-bottom:1px solid rgba(255,255,255,0.6)"></div>
<div class="a" style="left:424.35px;top:356.90px;width:16.5px;height:14.6px;background:#C0C0C0;border-top:1.4px solid rgba(0,0,0,0.5);border-left:1.4px solid rgba(0,0,0,0.5);border-right:1px solid rgba(255,255,255,0.6);border-bottom:1px solid rgba(255,255,255,0.6)"></div>
<div class="a" style="left:449.60px;top:356.90px;width:16.5px;height:14.6px;background:#400040;border-top:1.4px solid rgba(0,0,0,0.5);border-left:1.4px solid rgba(0,0,0,0.5);border-right:1px solid rgba(255,255,255,0.6);border-bottom:1px solid rgba(255,255,255,0.6)"></div>
<div class="a" style="left:474.85px;top:356.90px;width:16.5px;height:14.6px;background:#FFFFFF;border-top:1.4px solid rgba(0,0,0,0.5);border-left:1.4px solid rgba(0,0,0,0.5);border-right:1px solid rgba(255,255,255,0.6);border-bottom:1px solid rgba(255,255,255,0.6)"></div>
<div class="a" style="left:298.10px;top:410.30px;width:16.5px;height:14.8px;background:#fdfdfd;border-top:1.6px solid #606060;border-left:1.6px solid #606060;border-right:1px solid #ffffff;border-bottom:1px solid #ffffff"></div>
<div class="a" style="left:323.35px;top:410.30px;width:16.5px;height:14.8px;background:#fdfdfd;border-top:1.6px solid #606060;border-left:1.6px solid #606060;border-right:1px solid #ffffff;border-bottom:1px solid #ffffff"></div>
<div class="a" style="left:348.60px;top:410.30px;width:16.5px;height:14.8px;background:#fdfdfd;border-top:1.6px solid #606060;border-left:1.6px solid #606060;border-right:1px solid #ffffff;border-bottom:1px solid #ffffff"></div>
<div class="a" style="left:373.85px;top:410.30px;width:16.5px;height:14.8px;background:#fdfdfd;border-top:1.6px solid #606060;border-left:1.6px solid #606060;border-right:1px solid #ffffff;border-bottom:1px solid #ffffff"></div>
<div class="a" style="left:399.10px;top:410.30px;width:16.5px;height:14.8px;background:#fdfdfd;border-top:1.6px solid #606060;border-left:1.6px solid #606060;border-right:1px solid #ffffff;border-bottom:1px solid #ffffff"></div>
<div class="a" style="left:424.35px;top:410.30px;width:16.5px;height:14.8px;background:#fdfdfd;border-top:1.6px solid #606060;border-left:1.6px solid #606060;border-right:1px solid #ffffff;border-bottom:1px solid #ffffff"></div>
<div class="a" style="left:449.60px;top:410.30px;width:16.5px;height:14.8px;background:#fdfdfd;border-top:1.6px solid #606060;border-left:1.6px solid #606060;border-right:1px solid #ffffff;border-bottom:1px solid #ffffff"></div>
<div class="a" style="left:474.85px;top:410.30px;width:16.5px;height:14.8px;background:#fdfdfd;border-top:1.6px solid #606060;border-left:1.6px solid #606060;border-right:1px solid #ffffff;border-bottom:1px solid #ffffff"></div>
<div class="a" style="left:298.10px;top:431.60px;width:16.5px;height:14.8px;background:#fdfdfd;border-top:1.6px solid #606060;border-left:1.6px solid #606060;border-right:1px solid #ffffff;border-bottom:1px solid #ffffff"></div>
<div class="a" style="left:323.35px;top:431.60px;width:16.5px;height:14.8px;background:#fdfdfd;border-top:1.6px solid #606060;border-left:1.6px solid #606060;border-right:1px solid #ffffff;border-bottom:1px solid #ffffff"></div>
<div class="a" style="left:348.60px;top:431.60px;width:16.5px;height:14.8px;background:#fdfdfd;border-top:1.6px solid #606060;border-left:1.6px solid #606060;border-right:1px solid #ffffff;border-bottom:1px solid #ffffff"></div>
<div class="a" style="left:373.85px;top:431.60px;width:16.5px;height:14.8px;background:#fdfdfd;border-top:1.6px solid #606060;border-left:1.6px solid #606060;border-right:1px solid #ffffff;border-bottom:1px solid #ffffff"></div>
<div class="a" style="left:399.10px;top:431.60px;width:16.5px;height:14.8px;background:#fdfdfd;border-top:1.6px solid #606060;border-left:1.6px solid #606060;border-right:1px solid #ffffff;border-bottom:1px solid #ffffff"></div>
<div class="a" style="left:424.35px;top:431.60px;width:16.5px;height:14.8px;background:#fdfdfd;border-top:1.6px solid #606060;border-left:1.6px solid #606060;border-right:1px solid #ffffff;border-bottom:1px solid #ffffff"></div>
<div class="a" style="left:449.60px;top:431.60px;width:16.5px;height:14.8px;background:#fdfdfd;border-top:1.6px solid #606060;border-left:1.6px solid #606060;border-right:1px solid #ffffff;border-bottom:1px solid #ffffff"></div>
<div class="a" style="left:474.85px;top:431.60px;width:16.5px;height:14.8px;background:#fdfdfd;border-top:1.6px solid #606060;border-left:1.6px solid #606060;border-right:1px solid #ffffff;border-bottom:1px solid #ffffff"></div>
<div class="a" style="left:295.5px;top:463.2px;width:197.6px;height:17.6px;border-radius:3px;background:#f5f5f5;border:1px solid #e8e8e8"></div>
<div class="a" style="left:295px;top:487.1px;width:62px;height:19.6px;border-radius:4px;background:#eef9fd;border:1.4px solid #56738c"></div>
<div class="a" style="left:365.5px;top:487.1px;width:61px;height:19.6px;border-radius:4px;background:#fdfdfd;border:1px solid #d2d2d2;border-bottom-color:#bdbdbd"></div>
<div class="a" style="left:509.5px;top:231.2px;width:171px;height:181.5px;background:linear-gradient(to right,#ff0000 0%,#ffff00 16.67%,#00ff00 33.33%,#00ffff 50%,#0000ff 66.67%,#ff00ff 83.33%,#ff0000 100%)"></div>
<div class="a" style="left:509.5px;top:231.2px;width:171px;height:181.5px;border-top:1px solid rgba(60,60,60,0.7);border-left:1px solid rgba(60,60,60,0.7);background:linear-gradient(to bottom,rgba(128,128,128,0) 0%,rgba(128,128,128,0.44) 50%,rgba(128,128,128,1) 100%)"></div>
<div class="a" style="left:623.2px;top:403.2px;width:2.7px;height:4.6px;background:#000"></div>
<div class="a" style="left:615.2px;top:411px;width:4.8px;height:1.7px;background:#000"></div>
<div class="a" style="left:629.1px;top:411px;width:4.9px;height:1.7px;background:#000"></div>
<div class="a" style="left:696.3px;top:231px;width:10.7px;height:181.6px;border-top:1px solid #6a6a6a;border-left:1px solid #6a6a6a;background:linear-gradient(to bottom,#ffffff 0%,#8c8c8c 50%,#000000 100%)"></div>
<svg width="9" height="13" viewBox="0 0 9 13" style="left:707.5px;top:406px"><path d="M0.5 6.2 L8 0.5 V12 Z" fill="#000"/></svg>
<div class="a" style="left:510.3px;top:420.6px;width:56.5px;height:39.2px;background:#000"></div>
<div class="a" style="left:603.6px;top:421.0px;width:24px;height:18.3px;background:#fff;border-radius:1.5px;border-bottom:1px solid #8c8c8c"></div>
<div class="a" style="left:681.2px;top:421.0px;width:24px;height:18.3px;background:#fff;border-radius:1.5px;border-bottom:1px solid #8c8c8c"></div>
<div class="a" style="left:603.6px;top:442.2px;width:24px;height:18.3px;background:#fff;border-radius:1.5px;border-bottom:1px solid #8c8c8c"></div>
<div class="a" style="left:681.2px;top:442.2px;width:24px;height:18.3px;background:#fff;border-radius:1.5px;border-bottom:1px solid #8c8c8c"></div>
<div class="a" style="left:603.6px;top:463.8px;width:24px;height:18.3px;background:#fff;border-radius:1.5px;border-bottom:1px solid #8c8c8c"></div>
<div class="a" style="left:681.2px;top:463.8px;width:24px;height:18.3px;background:#fff;border-radius:1.5px;border-bottom:1px solid #8c8c8c"></div>
<div class="a" style="left:511.4px;top:487.6px;width:203.3px;height:19px;border-radius:4px;background:#fdfdfd;border:1px solid #d2d2d2;border-bottom-color:#bdbdbd"></div>
<!-- texts -->
<div class="t" style="left:63.41px;top:20.00px;font-size:12.03px;color:#1a1a1a;transform:scaleX(0.987);transform-origin:0 0">Untitled - Paint</div>
<div class="t" style="left:30.73px;top:59.00px;font-size:13.40px;color:#1a1a1a;transform:scaleX(0.965);transform-origin:0 0">File</div>
<div class="t" style="left:78.90px;top:59.00px;font-size:13.40px;color:#1a1a1a;transform:scaleX(0.976);transform-origin:0 0">View</div>
<div class="t" style="left:43.70px;top:175.00px;font-size:11.60px;color:#6e6e6e;transform:scaleX(1.035);transform-origin:0 0">Clipboard</div>
<div class="t" style="left:175.77px;top:175.00px;font-size:11.60px;color:#6e6e6e;transform:scaleX(1.032);transform-origin:0 0">Image</div>
<div class="t" style="left:320.50px;top:175.00px;font-size:11.60px;color:#6e6e6e;transform:scaleX(0.981);transform-origin:0 0">Tools</div>
<div class="t" style="left:411.72px;top:175.00px;font-size:11.60px;color:#6e6e6e;transform:scaleX(0.976);transform-origin:0 0">Brushes</div>
<div class="t" style="left:478.50px;top:175.00px;font-size:11.60px;color:#6e6e6e;transform:scaleX(0.951);transform-origin:0 0">Shapes</div>
<div class="t" style="left:545.50px;top:175.00px;font-size:11.60px;color:#6e6e6e;transform:scaleX(0.932);transform-origin:0 0">Size</div>
<div class="t" style="left:750.50px;top:175.00px;font-size:11.60px;color:#6e6e6e;transform:scaleX(1.000);transform-origin:0 0">Colors</div>
<div class="t" style="left:315.26px;top:583.00px;font-size:11.16px;color:#1f1f1f;transform:scaleX(1.040);transform-origin:0 0">1736 × 624px</div>
<div class="t" style="left:762.40px;top:583.00px;font-size:11.16px;color:#1f1f1f;transform:scaleX(0.959);transform-origin:0 0">50%</div>
<div class="t" style="left:295.75px;top:204.00px;font-size:11.88px;color:#1a1a1a;transform:scaleX(0.954);transform-origin:0 0">Edit Colors</div>
<div class="t" style="left:294.24px;top:232.00px;font-size:11.74px;color:#1a1a1a;transform:scaleX(0.862);transform-origin:0 0">Basic colors:</div>
<div class="t" style="left:293.70px;top:393.00px;font-size:11.45px;color:#1a1a1a;transform:scaleX(0.875);transform-origin:0 0">Custom colors:</div>
<div class="t" style="left:337.23px;top:467.00px;font-size:11.59px;color:#a3a3a3;transform:scaleX(0.871);transform-origin:0 0">Define Custom Colors &gt;&gt;</div>
<div class="t" style="left:318.00px;top:493.00px;font-size:11.88px;color:#1a1a1a;transform:scaleX(0.865);transform-origin:0 0">OK</div>
<div class="t" style="left:378.90px;top:493.00px;font-size:11.88px;color:#1a1a1a;transform:scaleX(0.868);transform-origin:0 0">Cancel</div>
<div class="t" style="left:515.00px;top:463.00px;font-size:10.72px;color:#1a1a1a;transform:scaleX(0.908);transform-origin:0 0">Color<span style="color:#8a9aa8">|</span>Solid</div>
<div class="t" style="left:577.08px;top:424.00px;font-size:11.70px;color:#1a1a1a;transform:scaleX(0.917);transform-origin:0 0">Hue:</div>
<div class="t" style="left:581.50px;top:446.00px;font-size:11.70px;color:#1a1a1a;transform:scaleX(0.880);transform-origin:0 0">Sat:</div>
<div class="t" style="left:577.33px;top:467.00px;font-size:11.70px;color:#1a1a1a;transform:scaleX(0.871);transform-origin:0 0">Lum:</div>
<div class="t" style="left:654.57px;top:424.00px;font-size:11.70px;color:#1a1a1a;transform:scaleX(0.930);transform-origin:0 0">Red:</div>
<div class="t" style="left:646.20px;top:446.00px;font-size:11.70px;color:#1a1a1a;transform:scaleX(0.877);transform-origin:0 0">Green:</div>
<div class="t" style="left:653.71px;top:467.00px;font-size:11.70px;color:#1a1a1a;transform:scaleX(0.892);transform-origin:0 0">Blue:</div>
<div class="t" style="left:605.63px;top:425.00px;font-size:11.90px;color:#1a1a1a;transform:scaleX(0.868);transform-origin:0 0">160</div>
<div class="t" style="left:606.60px;top:447.00px;font-size:11.90px;color:#1a1a1a;transform:scaleX(0.840);transform-origin:0 0">0</div>
<div class="t" style="left:606.60px;top:468.00px;font-size:11.90px;color:#1a1a1a;transform:scaleX(0.840);transform-origin:0 0">0</div>
<div class="t" style="left:683.80px;top:425.00px;font-size:11.90px;color:#1a1a1a;transform:scaleX(0.840);transform-origin:0 0">0</div>
<div class="t" style="left:683.80px;top:447.00px;font-size:11.90px;color:#1a1a1a;transform:scaleX(0.840);transform-origin:0 0">0</div>
<div class="t" style="left:683.80px;top:468.00px;font-size:11.90px;color:#1a1a1a;transform:scaleX(0.840);transform-origin:0 0">0</div>
<div class="t" style="left:564.50px;top:492.00px;font-size:11.88px;color:#1a1a1a;transform:scaleX(0.834);transform-origin:0 0">Add to Custom Colors</div>
</body></html>
